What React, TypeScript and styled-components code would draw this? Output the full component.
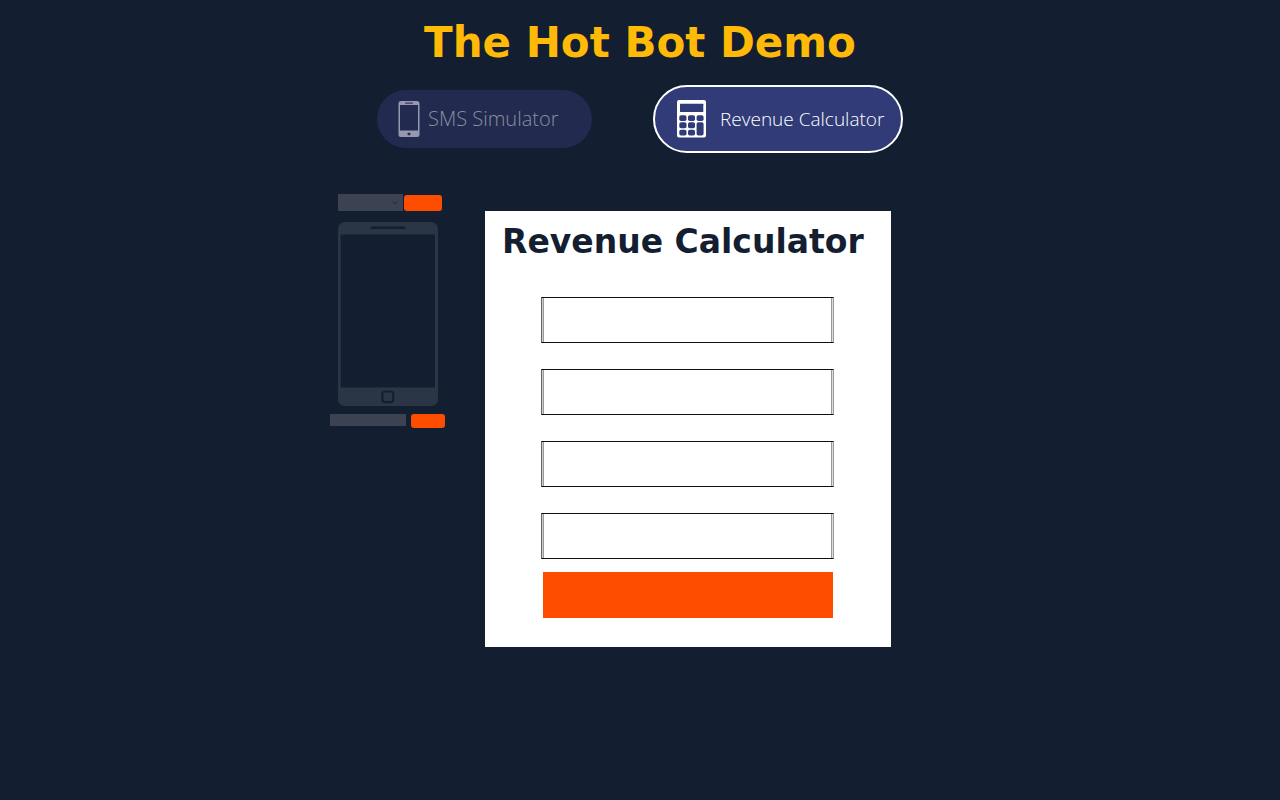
import React from "react";
import styled, { createGlobalStyle } from "styled-components";

const GlobalStyle = createGlobalStyle`
  *, *::before, *::after { box-sizing: border-box; }
  body { margin: 0; background: #131e31; font-family: "Open Sans", sans-serif; }
  button, input, select { font: inherit; border: 0; border-radius: 0; padding: 0; margin: 0; }
  button { cursor: pointer; }
`;

const Page = styled.div`
  min-height: 100vh;
  padding: 16px 16px 40px;
  display: flex;
  flex-direction: column;
  align-items: center;
`;

const PageTitle = styled.h1`
  margin: 0;
  color: #ffba08;
  font: 700 42px/54px "DejaVu Sans", sans-serif;
  text-align: center;
`;

const Tabs = styled.nav`
  display: flex;
  flex-wrap: wrap;
  align-items: center;
  justify-content: center;
  gap: 61px;
  margin-top: 15px;
`;

const Tab = styled.button<{ $active?: boolean }>`
  display: flex;
  align-items: center;
  gap: ${(p) => (p.$active ? 14 : 8)}px;
  width: ${(p) => (p.$active ? 250 : 215)}px;
  height: ${(p) => (p.$active ? 68 : 58)}px;
  padding-left: ${(p) => (p.$active ? 22 : 21)}px;
  border: ${(p) => (p.$active ? "2px solid #fff" : "0")};
  border-radius: 34px;
  background: ${(p) => (p.$active ? "#313b77" : "#222a50")};
  color: ${(p) => (p.$active ? "#fff" : "#8a8f9b")};
  font: 300 ${(p) => (p.$active ? 19 : 20)}px/24px "Open Sans", sans-serif;
  white-space: nowrap;
`;

const Workspace = styled.main`
  display: flex;
  align-items: flex-start;
  gap: 40px;
  margin-top: 41px;
  padding-right: 59px;
`;

const Simulator = styled.section`
  display: flex;
  flex-direction: column;
  width: 115px;
`;

const PickerRow = styled.form`
  display: flex;
  align-items: flex-end;
  gap: 1px;
  margin-left: 8px;
`;

const PickerBox = styled.div`
  display: grid;
  width: 65px;
  height: 17px;
  background: #3d4252;
  align-items: center;

  > * { grid-area: 1 / 1; }
  svg { justify-self: end; margin-right: 5px; pointer-events: none; }
`;

const Picker = styled.select`
  appearance: none;
  width: 100%;
  height: 17px;
  background: transparent;
  color: #131e31;
`;

const SmallButton = styled.button<{ $width: number; $height: number }>`
  width: ${(p) => p.$width}px;
  height: ${(p) => p.$height}px;
  border-radius: 3px;
  background: #ff4d00;
`;

const PhoneArt = styled.svg`
  display: block;
  margin: 11px 0 8px 8px;
`;

const MessageRow = styled.form`
  display: flex;
  align-items: flex-start;
  gap: 5px;
`;

const MessageInput = styled.input`
  width: 76px;
  height: 12px;
  background: #3d4252;
`;

const Card = styled.section`
  width: 406px;
  margin-top: 17px;
  padding: 11px 17px 29px;
  background: #fff;
`;

const CardTitle = styled.h2`
  margin: 0;
  color: #131e31;
  font: 700 33px/40px "DejaVu Sans", sans-serif;
  white-space: nowrap;
`;

const Fields = styled.form`
  display: flex;
  flex-direction: column;
  gap: 26px;
  margin: 35px 40px 0 39px;
`;

const Field = styled.input`
  width: 100%;
  height: 46px;
  padding: 0 12px;
  border: 1px solid;
  border-color: #111 #999 #111 #666;
  background: #fff;
  box-shadow: inset 1px 0 #ccc, inset -1px 0 #ddd, inset 2px 0 #999, inset -2px 0 #999;
`;

const Submit = styled.button`
  height: 46px;
  margin: -13px 1px 0 2px;
  background: #ff4d00;
`;

const PhoneIcon = () => (
  <svg width="22" height="36" viewBox="0 0 22 36" aria-hidden="true">
    <rect x=".5" width="21" height="36" rx="2.5" fill="#9698b1" />
    <rect x="2" y="4" width="18" height="25.5" fill="#222a50" />
    <rect x="7" y="1.4" width="8" height="1.3" rx=".6" fill="#343b62" />
    <rect x="9.6" y="31.8" width="2.8" height="2.4" rx=".7" fill="#222a50" />
  </svg>
);

const CalculatorIcon = () => (
  <svg width="29" height="38" viewBox="0 0 29 38" aria-hidden="true">
    <rect width="29" height="37.5" rx="2" fill="#fff" />
    <g fill="#313b77">
      <rect x="3" y="3.7" width="23.3" height="8.3" rx=".5" />
      <rect x="2.3" y="15.2" width="7.2" height="5.8" rx="1.8" />
      <rect x="11" y="15.2" width="7" height="5.8" rx="1.8" />
      <rect x="19.6" y="15.2" width="7" height="5.8" rx="1.8" />
      <rect x="2.3" y="22.3" width="7.2" height="6" rx="1.8" />
      <rect x="11" y="22.3" width="7" height="6" rx="1.8" />
      <rect x="2.3" y="29.8" width="7.2" height="5.8" rx="1.8" />
      <rect x="11" y="29.8" width="7" height="5.8" rx="1.8" />
      <rect x="19.6" y="22.3" width="7" height="13.3" rx="1.8" />
    </g>
  </svg>
);

const fields = ["Customers", "Average sale", "Response rate", "Messages"];

export default function App() {
  return (
    <>
      <GlobalStyle />
      <Page>
        <PageTitle>The Hot Bot Demo</PageTitle>
        <Tabs>
          <Tab type="button"><PhoneIcon />SMS Simulator</Tab>
          <Tab type="button" $active><CalculatorIcon />Revenue Calculator</Tab>
        </Tabs>
        <Workspace>
          <Simulator>
            <PickerRow>
              <PickerBox>
                <Picker aria-label="Scenario" />
                <svg width="6" height="5" viewBox="0 0 6 5" fill="none" stroke="#202a3a" strokeWidth="1">
                  <path d="M.7 1.5 3 4 5.3 1.5" />
                </svg>
              </PickerBox>
              <SmallButton type="button" aria-label="Start" $width={38} $height={16} />
            </PickerRow>
            <PhoneArt width="100" height="184" viewBox="0 0 100 184" aria-hidden="true">
              <rect width="100" height="184" rx="7" fill="#2b3545" />
              <rect x="2.7" y="12.5" width="94.3" height="153" fill="#131e31" />
              <rect x="32.5" y="4.5" width="35" height="2.6" rx="1" fill="#131e31" />
              <rect x="44.3" y="169.5" width="11" height="10.6" rx="2.5" fill="#2b3545" stroke="#131e31" strokeWidth="2.2" />
            </PhoneArt>
            <MessageRow>
              <MessageInput aria-label="Message" />
              <SmallButton type="button" aria-label="Send" $width={34} $height={14} />
            </MessageRow>
          </Simulator>
          <Card>
            <CardTitle>Revenue Calculator</CardTitle>
            <Fields>
              {fields.map((name) => <Field key={name} aria-label={name} />)}
              <Submit type="button" aria-label="Calculate" />
            </Fields>
          </Card>
        </Workspace>
      </Page>
    </>
  );
}
